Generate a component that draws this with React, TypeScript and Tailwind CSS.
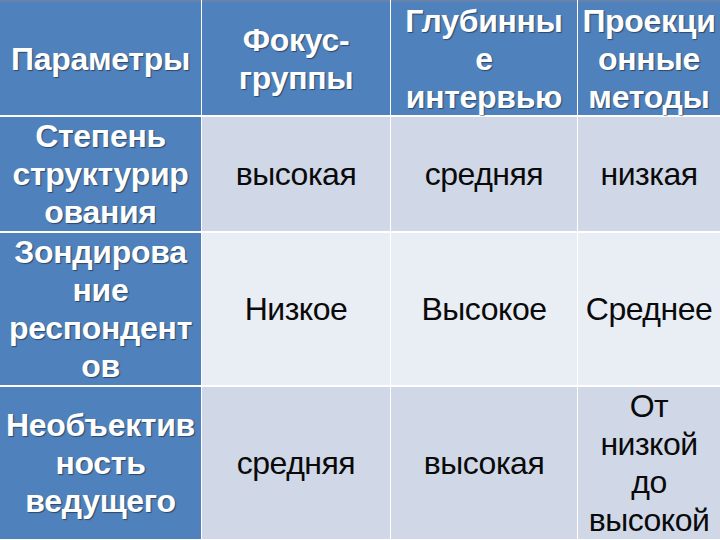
import React from "react";

const header: string[][] = [
  ["Параметры"],
  ["Фокус-", "группы"],
  ["Глубинны", "е", "интервью"],
  ["Проекци", "онные", "методы"],
];

const rows: { label: string[]; values: string[][]; bg: string }[] = [
  {
    label: ["Степень", "структурир", "ования"],
    values: [["высокая"], ["средняя"], ["низкая"]],
    bg: "bg-[#d0d8e8]",
  },
  {
    label: ["Зондирова", "ние", "респондент", "ов"],
    values: [["Низкое"], ["Высокое"], ["Среднее"]],
    bg: "bg-[#e9edf4]",
  },
  {
    label: ["Необъектив", "ность", "ведущего"],
    values: [["средняя"], ["высокая"], ["От", "низкой", "до", "высокой"]],
    bg: "bg-[#d0d8e8]",
  },
];

function Lines({ lines }: { lines: string[] }) {
  return (
    <div className="flex flex-col items-center">
      {lines.map((l, i) => (
        <span key={i} className="whitespace-nowrap">
          {l}
        </span>
      ))}
    </div>
  );
}

export default function App() {
  return (
    <div className="w-[720px] h-[540px] bg-white overflow-hidden font-['Liberation_Sans',Arial,sans-serif] text-[32px] leading-[38px]">
      <div className="grid grid-cols-[201px_188px_186px_142px] gap-x-px gap-y-[2px] bg-white">
        {header.map((h, i) => (
          <div
            key={i}
            className="bg-[#4f81bd] border-t-2 border-[#6583ad] h-[115px] flex items-center justify-center text-center text-white font-bold tracking-[-0.3px] [text-shadow:1px_1px_1px_rgba(0,0,0,0.45)]"
          >
            <Lines lines={h} />
          </div>
        ))}
        {rows.map((r, ri) => (
          <React.Fragment key={ri}>
            <div className="bg-[#4f81bd] flex items-center justify-center text-center text-white font-bold tracking-[-0.3px] [text-shadow:1px_1px_1px_rgba(0,0,0,0.45)]">
              <Lines lines={r.label} />
            </div>
            {r.values.map((v, vi) => (
              <div
                key={vi}
                className={`${r.bg} flex items-center justify-center text-center text-[#0a0a0a] tracking-[-0.5px]`}
              >
                <Lines lines={v} />
              </div>
            ))}
          </React.Fragment>
        ))}
      </div>
    </div>
  );
}
